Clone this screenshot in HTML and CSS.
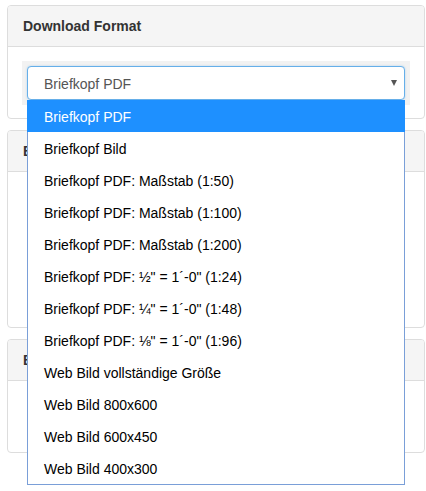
FILE: index.html
```html
<!DOCTYPE html>
<html lang="de">

<head>
  <meta charset="UTF-8" />
  <meta name="viewport" content="width=device-width, initial-scale=1.0" />
  <title>Download Format</title>
  <link rel="stylesheet" href="styles.css">
</head>

<body>
  <div class="panel">
    <div class="panel-heading">Download Format</div>
    <div class="panel-body">
      <div class="select-wrap">
        <div class="select">
          <span>Briefkopf PDF</span>
          <span class="arrow"></span>
        </div>

        <ul class="dropdown">
          <li class="selected">Briefkopf PDF</li>
          <li>Briefkopf Bild</li>
          <li>Briefkopf PDF: Maßstab (1:50)</li>
          <li>Briefkopf PDF: Maßstab (1:100)</li>
          <li>Briefkopf PDF: Maßstab (1:200)</li>
          <li>Briefkopf PDF: ½" = 1´-0" (1:24)</li>
          <li>Briefkopf PDF: ¼" = 1´-0" (1:48)</li>
          <li>Briefkopf PDF: ⅛" = 1´-0" (1:96)</li>
          <li>Web Bild vollständige Größe</li>
          <li>Web Bild 800x600</li>
          <li>Web Bild 600x450</li>
          <li>Web Bild 400x300</li>
        </ul>
      </div>
    </div>
  </div>

  <div class="panel">
    <div class="panel-heading">Briefkopf Optionen</div>
    <div class="panel-body tall"></div>
  </div>

  <div class="panel">
    <div class="panel-heading">Bild Optionen</div>
    <div class="panel-body short"></div>
  </div>
</body>

</html>
```

FILE: styles.css
```css
* {
  box-sizing: border-box;
  margin: 0;
  padding: 0;
}

html {
  background: #fff;
}

body {
  margin: 5px 1px 0 7px;
  min-height: 486px;
  font-family: "Liberation Sans", Arial, sans-serif;
  font-size: 14px;
  color: #333;
  background: #fff;
}

/* Panels */
.panel {
  border: 1px solid #ddd;
  border-radius: 4px;
  margin-bottom: 11px;
  background: #fff;
}

.panel-heading {
  height: 41px;
  padding: 10px 15px;
  line-height: 20px;
  font-weight: bold;
  background: #f5f5f5;
  border-bottom: 1px solid #ddd;
  border-radius: 3px 3px 0 0;
}

.panel-body {
  padding: 14px 14px 13px;
}

.panel-body.tall {
  height: 155px;
}

.panel-body.short {
  height: 71px;
}

/* Select */
.select-wrap {
  position: relative;
  padding: 5px;
  background: #f2f2f2;
}

.select {
  display: flex;
  justify-content: space-between;
  align-items: center;
  height: 34px;
  padding: 7px 7px 5px 16px;
  line-height: 20px;
  color: #555;
  background: #fff;
  border: 1px solid #66afe9;
  border-radius: 4px;
  box-shadow: 0 0 2px rgba(102, 175, 233, 0.5);
}

.arrow {
  width: 0;
  height: 0;
  margin-top: -2px;
  border-left: 3.5px solid transparent;
  border-right: 3.5px solid transparent;
  border-top: 6px solid #555;
}

/* Dropdown list */
.dropdown {
  position: absolute;
  top: 39px;
  left: 5px;
  right: 5px;
  list-style: none;
  background: #fff;
  border: 1px solid #7a9fd8;
  border-top: none;
  z-index: 10;
}

.dropdown li {
  height: 32px;
  line-height: 32px;
  padding-top: 1px;
  padding-left: 16px;
  color: #000;
  white-space: nowrap;
}

.dropdown li.selected {
  background: #1e90ff;
  color: #fff;
  margin: 0 -1px;
  padding-left: 17px;
}
```
